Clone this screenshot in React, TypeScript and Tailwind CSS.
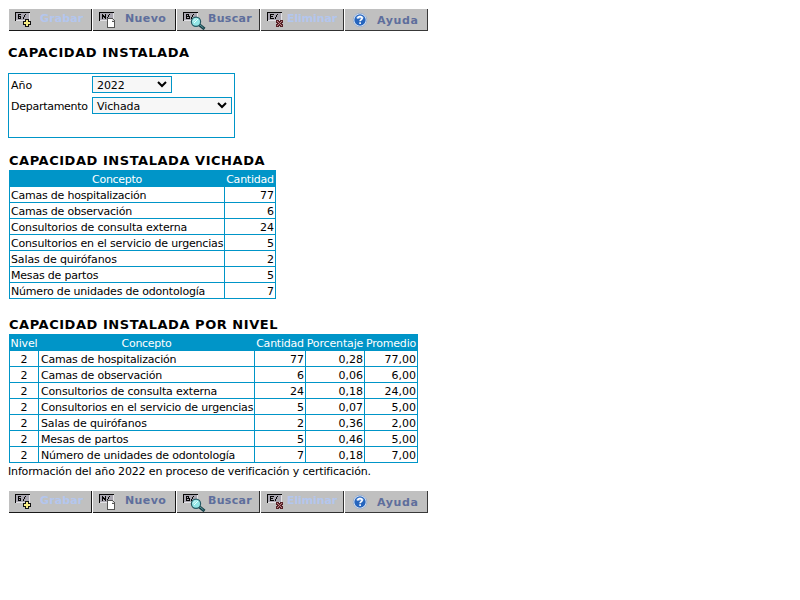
import React from "react";

const concepts = [
  { name: "Camas de hospitalización", spacing: "tracking-[-0.21px]", qty: "77", pct: "0,28", avg: "77,00" },
  { name: "Camas de observación", spacing: "tracking-[-0.21px]", qty: "6", pct: "0,06", avg: "6,00" },
  { name: "Consultorios de consulta externa", spacing: "tracking-[-0.16px]", qty: "24", pct: "0,18", avg: "24,00" },
  { name: "Consultorios en el servicio de urgencias", spacing: "tracking-[-0.17px]", qty: "5", pct: "0,07", avg: "5,00" },
  { name: "Salas de quirófanos", spacing: "tracking-[-0.12px]", qty: "2", pct: "0,36", avg: "2,00" },
  { name: "Mesas de partos", spacing: "tracking-[-0.2px]", qty: "5", pct: "0,46", avg: "5,00" },
  { name: "Número de unidades de odontología", spacing: "tracking-[-0.19px]", qty: "7", pct: "0,18", avg: "7,00" },
];

type Kind = "G" | "N" | "B" | "E";

const letters: Record<Kind, string> = {
  G: "M9 5h3v1h-2v3h1v-1h-1v-1h2v3h-3z",
  N: "M9 5h1v1h1v1h1v-2h1v5h-1v-1h-1v-1h-1v2h-1z",
  B: "M9 5h3v2h1v3h-4zM10 6v1h1v-1zM10 8v1h2v-1z",
  E: "M9 5h4v1h-3v1h2v1h-2v1h3v1h-4z",
};

// Small form window with a per-action symbol over its lower right corner.
function FormIcon({ kind }: { kind: Kind }) {
  return (
    <svg className="block shrink-0" width="32" height="21" viewBox="0 0 32 21" shapeRendering="crispEdges">
      <path d="M6 3h15v9h-15z" fill="#aaa7b1" />
      <path d="M6 3h15v1h-14v8h-1z" fill="#080808" />
      <path d="M20 4h1v8h-14v-1h13z" fill="#e2e1e5" />
      <path d={letters[kind]} fill="#050505" fillRule="evenodd" />
      <path d="M16 5h1v1h-1v2h-1v2h-1v-2h1v-2h1z" fill="#050505" />
      {kind === "G" && (
        <>
          <path d="M16 10h4v2h2v4h-2v2h-4v-2h-2v-4h2z" fill="#111" />
          <path d="M17 11h2v2h2v2h-2v2h-2v-2h-2v-2h2z" fill="#f7ed86" />
        </>
      )}
      {kind === "N" && (
        <>
          <path d="M14 9h5l3 3v7h-8z" fill="#555" />
          <path d="M15 10h4v3h2v5h-6z" fill="#fff" />
          <path d="M19 10l2 2h-2z" fill="#ddd" />
        </>
      )}
      {kind === "B" && (
        <g shapeRendering="auto">
          <path d="M22.500 16l5 4" stroke="#153f46" strokeWidth="3" />
          <path d="M22.500 15.500l4 3.500" stroke="#60a0a6" strokeWidth="1" />
          <circle cx="19" cy="12.700" r="4.600" fill="#93e6e6" stroke="#245963" strokeWidth="1.200" />
          <path d="M16 12.500l3-3M17 14l4-4" stroke="#e8ffff" strokeWidth="1" />
        </g>
      )}
      {kind === "E" && (
        <>
          <path d="M15 11h3v1h1v-1h3v3h-1v1h1v3h-3v-1h-1v1h-3v-3h1v-1h-1z" fill="#552126" />
          <path d="M16 12h1v1h1v1h1v-1h1v-1h1v1h-1v1h-1v1h1v1h1v1h-1v-1h-1v-1h-1v1h-1v1h-1v-1h1v-1h1v-1h-1v-1h-1z" fill="#c08589" />
        </>
      )}
    </svg>
  );
}

function HelpIcon() {
  return (
    <svg className="block shrink-0" width="32" height="21" viewBox="0 0 32 21">
      <circle cx="15" cy="11" r="6.800" fill="#e4edf8" stroke="#7e9bc6" strokeWidth="0.600" />
      <circle cx="15" cy="11" r="5.700" fill="#2564bd" />
      <path d="M10.500 9a5 5 0 0 1 9 0q-4.500 2-9 0" fill="#6796d8" />
      <path d="M12.700 9.500q.2-1.900 2.300-1.900 2.200 0 2.200 1.700 0 1-1.300 1.600-.8.4-.8 1.300M15.100 13.300v1.600" fill="none" stroke="#fff" strokeWidth="1.600" />
    </svg>
  );
}

const buttons: { label: string; kind: Kind; look: string }[] = [
  { label: "Grabar", kind: "G", look: "text-[#b3c6ee] tracking-[0.1px] border-[#181818]" },
  { label: "Nuevo", kind: "N", look: "text-[#5e6e9c] tracking-[0.4px] border-[#181818]" },
  { label: "Buscar", kind: "B", look: "text-[#5e6e9c] tracking-[0.3px] border-[#303030]" },
  { label: "Eliminar", kind: "E", look: "text-[#b3c6ee] tracking-[-0.1px] border-[#303030]" },
];

const labelPad: Record<Kind, string> = { G: "pl-[31px]", N: "pl-[32px]", B: "pl-[31px]", E: "pl-[26px]" };

function Toolbar() {
  return (
    <div className="flex h-[22px] w-[420px]">
      {buttons.map((b) => (
        <button key={b.label} type="button" className={`relative ml-px h-[22px] w-[83px] border-r border-b bg-[#c0c0c0] text-left text-[11px] leading-[20px] font-bold whitespace-nowrap ${b.look}`}>
          <span className="absolute top-0 left-0"><FormIcon kind={b.kind} /></span>
          <span className={`block h-[21px] ${labelPad[b.kind]}`}>{b.label}</span>
        </button>
      ))}
      <button type="button" className="relative ml-px h-[22px] w-[83px] border-r border-b border-[#383838] bg-[#c0c0c0] text-left text-[11px] leading-[24px] font-bold tracking-[0.6px] text-[#5e6e9c]">
        <span className="absolute top-0 left-0"><HelpIcon /></span>
        <span className="block h-[21px] pl-[32px]">Ayuda</span>
      </button>
    </div>
  );
}

function Select({ value, width }: { value: string; width: string }) {
  return (
    <div className={`flex h-[17px] items-center justify-between border border-[#0095c8] bg-[#f7f7f7] pr-[3px] pl-1 leading-[15px] ${width}`}>
      <span className="pt-px tracking-[-0.1px]">{value}</span>
      <svg className="mb-px" width="12" height="8" viewBox="0 0 12 8"><path d="M2 2l4 4 4-4" fill="none" stroke="#000" strokeWidth="2" /></svg>
    </div>
  );
}

const row = "grid h-4 border-b border-[#0095c8] leading-[15px] whitespace-nowrap";
const cell = "border-r border-[#0095c8] pt-px";
const num = "border-r border-[#0095c8] pt-px pr-px text-right";
const head = "border-r border-[#0095c8] pt-px text-center";

export default function App() {
  return (
    <main className="h-[600px] w-[800px] overflow-hidden bg-white pt-[9px] pl-2 font-['DejaVu_Sans',Verdana,sans-serif] text-[11px] text-black">
      <Toolbar />
      <h1 className="mt-[14px] h-4 text-[13px] leading-4 font-bold tracking-[0.58px] whitespace-nowrap">CAPACIDAD INSTALADA</h1>
      <form className="mt-[12px] h-[65px] w-[227px] border border-[#0095c8] pt-[2px] pl-[2px]">
        <div className="flex h-[21px]"><label className="w-[81px] leading-[19px]">Año</label><Select value="2022" width="w-20" /></div>
        <div className="flex"><label className="w-[81px] leading-[19px] tracking-[-0.27px]">Departamento</label><Select value="Vichada" width="w-[140px]" /></div>
      </form>
      <h2 className="mt-[15px] ml-px h-[17px] text-[13px] leading-4 font-bold tracking-[0.54px] whitespace-nowrap">CAPACIDAD INSTALADA VICHADA</h2>
      <div className="ml-px w-[267px] border-l border-[#0095c8]">
        <div className={`${row} grid-cols-[215px_51px] bg-[#0095c8] pt-px text-white`}>
          <div className={`${head} tracking-[-0.3px]`}>Concepto</div><div className={`${head} tracking-[-0.23px]`}>Cantidad</div>
        </div>
        <div className="h-px bg-[#0095c8]" />
        {concepts.map((c) => (
          <div key={c.name} className={`${row} grid-cols-[215px_51px]`}>
            <div className={`${cell} pl-px ${c.spacing}`}>{c.name}</div><div className={num}>{c.qty}</div>
          </div>
        ))}
      </div>
      <h2 className="mt-[18px] ml-px h-[17px] text-[13px] leading-4 font-bold tracking-[0.54px] whitespace-nowrap">CAPACIDAD INSTALADA POR NIVEL</h2>
      <div className="ml-px w-[409px] border-l border-[#0095c8]">
        <div className={`${row} grid-cols-[29px_216px_51px_59px_53px] bg-[#0095c8] pt-px text-white`}>
          <div className={`${head} tracking-[-0.15px]`}>Nivel</div><div className={`${head} tracking-[-0.3px]`}>Concepto</div><div className={`${head} tracking-[-0.23px]`}>Cantidad</div><div className={`${head} tracking-[-0.15px]`}>Porcentaje</div><div className={`${head} tracking-[-0.2px]`}>Promedio</div>
        </div>
        <div className="h-px bg-[#0095c8]" />
        {concepts.map((c) => (
          <div key={c.name} className={`${row} grid-cols-[29px_216px_51px_59px_53px]`}>
            <div className={head}>2</div><div className={`${cell} pl-[2px] ${c.spacing}`}>{c.name}</div><div className={num}>{c.qty}</div><div className={num}>{c.pct}</div><div className={num}>{c.avg}</div>
          </div>
        ))}
      </div>
      <p className="h-[28px] pt-px leading-4 tracking-[-0.155px]">Información del año 2022 en proceso de verificación y certificación.</p>
      <Toolbar />
    </main>
  );
}
